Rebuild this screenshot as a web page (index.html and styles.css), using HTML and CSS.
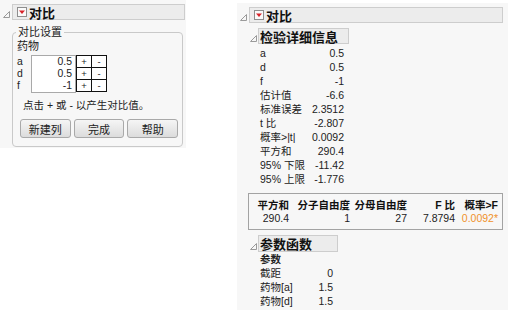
FILE: index.html
```html
<!DOCTYPE html>
<html lang="zh">
<head>
  <meta charset="UTF-8">
  <title>对比</title>
  <link rel="stylesheet" href="styles.css">
</head>
<body>
  <!-- contrast dialog -->
  <div class="panel left">
    <div class="outline">
      <svg class="tri" width="7" height="7" viewBox="0 0 7 7"><polygon points="0.5,6.5 6.5,6.5 6.5,0.5" fill="none" stroke="#9a9a9a"/></svg>
      <div class="head">
        <svg class="menu" width="10" height="10" viewBox="0 0 10 10"><rect x="0.5" y="0.5" width="9" height="9" fill="#fafafa" stroke="#8e8e8e"/><polygon points="2,3.5 8,3.5 5,7" fill="#d8232a"/></svg>
        <span>对比</span>
      </div>
    </div>

    <fieldset class="group">
      <legend>对比设置</legend>
      <div class="caption">药物</div>
      <div class="contrast">
        <div class="levels"><span>a</span><span>d</span><span>f</span></div>
        <div class="values"><span>0.5</span><span>0.5</span><span>-1</span></div>
        <div class="signs">
          <span>+</span><span>-</span>
          <span>+</span><span>-</span>
          <span>+</span><span>-</span>
        </div>
      </div>
      <p class="hint">点击 + 或 - 以产生对比值。</p>
      <div class="buttons">
        <button>新建列</button>
        <button>完成</button>
        <button>帮助</button>
      </div>
    </fieldset>
  </div>

  <!-- contrast report -->
  <div class="panel right">
    <div class="outline">
      <svg class="tri" width="7" height="7" viewBox="0 0 7 7"><polygon points="0.5,6.5 6.5,6.5 6.5,0.5" fill="none" stroke="#9a9a9a"/></svg>
      <div class="head">
        <svg class="menu" width="10" height="10" viewBox="0 0 10 10"><rect x="0.5" y="0.5" width="9" height="9" fill="#fafafa" stroke="#8e8e8e"/><polygon points="2,3.5 8,3.5 5,7" fill="#d8232a"/></svg>
        <span>对比</span>
      </div>
    </div>

    <div class="outline sub">
      <svg class="tri" width="7" height="7" viewBox="0 0 7 7"><polygon points="0.5,6.5 6.5,6.5 6.5,0.5" fill="none" stroke="#9a9a9a"/></svg>
      <div class="head test"><span>检验详细信息</span></div>
    </div>

    <div class="details">
      <span>a</span><span>0.5</span>
      <span>d</span><span>0.5</span>
      <span>f</span><span>-1</span>
      <span>估计值</span><span>-6.6</span>
      <span>标准误差</span><span>2.3512</span>
      <span>t 比</span><span>-2.807</span>
      <span>概率&gt;|t|</span><span>0.0092</span>
      <span>平方和</span><span>290.4</span>
      <span>95% 下限</span><span>-11.42</span>
      <span>95% 上限</span><span>-1.776</span>
    </div>

    <div class="ftest">
      <b>平方和</b><b>分子自由度</b><b>分母自由度</b><b>F 比</b><b>概率&gt;F</b>
      <span>290.4</span><span>1</span><span>27</span><span>7.8794</span><span class="sig">0.0092*</span>
    </div>

    <div class="outline sub">
      <svg class="tri" width="7" height="7" viewBox="0 0 7 7"><polygon points="0.5,6.5 6.5,6.5 6.5,0.5" fill="none" stroke="#9a9a9a"/></svg>
      <div class="head params-head"><span>参数函数</span></div>
    </div>

    <div class="params">
      <b>参数</b><span></span>
      <span>截距</span><span>0</span>
      <span>药物[a]</span><span>1.5</span>
      <span>药物[d]</span><span>1.5</span>
    </div>
  </div>
</body>
</html>
```

FILE: styles.css
```css
body {
  margin: 0;
  display: flex;
  align-items: flex-start;
  background: #fff;
  color: #222;
  font-family: "Liberation Sans", "Noto Sans CJK SC", sans-serif;
  font-size: 10.5px;
}

.panel {
  background: #f7f7f7;
}

.left {
  width: 186px;
  height: 148px;
}

.right {
  width: 271px;
  height: 307px;
  margin-top: 3px;
  margin-left: 51px;
}

.outline {
  display: flex;
  align-items: flex-end;
  padding-top: 4px;
}

.tri {
  margin: 0 2px 2px 3px;
  flex: none;
}

.head {
  flex: 1;
  height: 16px;
  box-sizing: border-box;
  display: flex;
  align-items: center;
  padding-left: 4px;
  margin-right: 1px;
  border: 1px solid #cdcdcd;
  background: #ececec;
  font-size: 13px;
  font-weight: bold;
  color: #111;
}

.right > .outline:first-child .head {
  margin-right: 5px;
}

.menu {
  margin-right: 2px;
  flex: none;
}

.outline.sub {
  padding-top: 5px;
  padding-left: 10px;
}

.outline.sub .tri {
  margin-right: 1px;
}

.head.test {
  flex: none;
  width: 91px;
  padding-left: 1px;
}

.head.params-head {
  flex: none;
  width: 80px;
  height: 17px;
  padding-left: 1px;
}

/* dialog */
.group {
  margin: 5px 3px 0 12px;
  padding: 0 4px 8px 4px;
  border: 1px solid #c9c9c9;
  border-radius: 4px;
  min-width: 0;
}

.group legend {
  padding: 0 2px;
  margin-left: -1px;
  line-height: 14px;
  font-size: 11px;
}

.caption {
  line-height: 14px;
  font-size: 11px;
}

.contrast {
  display: flex;
  margin-top: 2px;
}

.levels {
  width: 14px;
  display: flex;
  flex-direction: column;
  padding-top: 1px;
}

.levels span,
.values span {
  font-size: 10.4px;
  line-height: 12px;
}

.values {
  width: 45px;
  box-sizing: border-box;
  display: flex;
  flex-direction: column;
  align-items: flex-end;
  padding: 0 3px 0 0;
  border: 1px solid #a9a9a9;
  background: #fff;
}

.signs {
  display: grid;
  grid-template-columns: 14px 14px;
  grid-auto-rows: 11px;
  gap: 1px;
  padding: 1px;
  background: #111;
  width: fit-content;
  height: fit-content;
}

.signs span {
  background: #fff;
  text-align: center;
  line-height: 11px;
  font-size: 9.5px;
}

.hint {
  margin: 5px 0 0 6px;
  line-height: 14px;
  font-size: 10.5px;
}

.buttons {
  display: flex;
  gap: 3px;
  margin: 7px 0 0 3px;
}

.buttons button {
  width: 51px;
  height: 19px;
  padding: 0;
  border: 1px solid #a9a9a9;
  border-radius: 3px;
  background: linear-gradient(#f5f5f5, #dcdcdc);
  font-family: inherit;
  font-size: 11px;
  color: #222;
}

/* report */
.details {
  display: grid;
  grid-template-columns: 50px 34px;
  grid-auto-rows: 14px;
  margin: 2px 0 0 23px;
  line-height: 14px;
}

.details span:nth-child(even),
.params span:nth-child(even) {
  text-align: right;
}

.ftest {
  display: grid;
  grid-template-columns: 34px 61px 57px 48px 43px;
  grid-auto-rows: 13px;
  margin: 7px 5px 0 11px;
  padding: 5px 0 4px 6px;
  border: 1px solid #a3a3a3;
  line-height: 13px;
  text-align: right;
  white-space: nowrap;
}

.ftest b {
  font-weight: bold;
  color: #111;
}

.ftest .sig {
  color: #f0922b;
}

.params {
  display: grid;
  grid-template-columns: 48px 25px;
  grid-auto-rows: 14px;
  margin: 0 0 0 23px;
  line-height: 14px;
}

.params b {
  font-weight: bold;
}
```
